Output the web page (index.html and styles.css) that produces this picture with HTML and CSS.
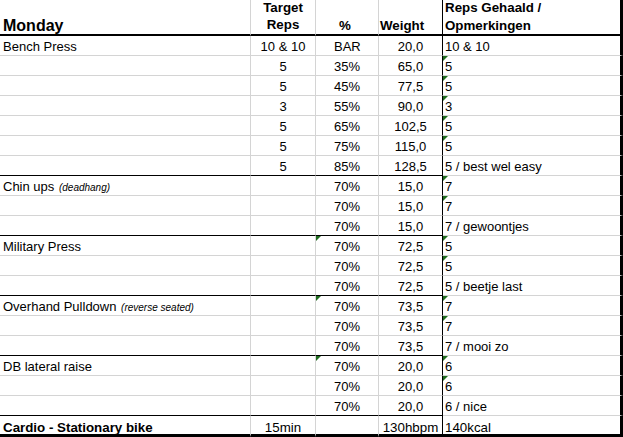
FILE: index.html
```html
<!DOCTYPE html>
<html>
<head>
<meta charset="utf-8">
<link rel="stylesheet" href="styles.css">
</head>
<body>
<div class="sheet">
  <div class="cell hd colA h-monday">Monday</div>
  <div class="cell hd colB h-target"><span>Target</span><span>Reps</span></div>
  <div class="cell hd colC h-pct">%</div>
  <div class="cell hd colD h-weight">Weight</div>
  <div class="cell hd colE h-reps"><span>Reps Gehaald /</span><span>Opmerkingen</span></div>

  <div class="cell colA">Bench Press</div>
  <div class="cell colB">10 &amp; 10</div>
  <div class="cell colC">BAR</div>
  <div class="cell colD">20,0</div>
  <div class="cell colE">10 &amp; 10</div>

  <div class="cell colA"></div>
  <div class="cell colB">5</div>
  <div class="cell colC">35%</div>
  <div class="cell colD">65,0</div>
  <div class="cell colE tri">5</div>

  <div class="cell colA"></div>
  <div class="cell colB">5</div>
  <div class="cell colC">45%</div>
  <div class="cell colD">77,5</div>
  <div class="cell colE tri">5</div>

  <div class="cell colA"></div>
  <div class="cell colB">3</div>
  <div class="cell colC">55%</div>
  <div class="cell colD">90,0</div>
  <div class="cell colE tri">3</div>

  <div class="cell colA"></div>
  <div class="cell colB">5</div>
  <div class="cell colC">65%</div>
  <div class="cell colD">102,5</div>
  <div class="cell colE tri">5</div>

  <div class="cell colA"></div>
  <div class="cell colB">5</div>
  <div class="cell colC">75%</div>
  <div class="cell colD">115,0</div>
  <div class="cell colE tri">5</div>

  <div class="cell colA sec"></div>
  <div class="cell colB sec">5</div>
  <div class="cell colC sec">85%</div>
  <div class="cell colD sec">128,5</div>
  <div class="cell colE">5 / best wel easy</div>

  <div class="cell colA">Chin ups <span class="note">(deadhang)</span></div>
  <div class="cell colB"></div>
  <div class="cell colC">70%</div>
  <div class="cell colD">15,0</div>
  <div class="cell colE tri">7</div>

  <div class="cell colA"></div>
  <div class="cell colB"></div>
  <div class="cell colC">70%</div>
  <div class="cell colD">15,0</div>
  <div class="cell colE tri">7</div>

  <div class="cell colA sec"></div>
  <div class="cell colB sec"></div>
  <div class="cell colC sec">70%</div>
  <div class="cell colD sec">15,0</div>
  <div class="cell colE">7 / gewoontjes</div>

  <div class="cell colA">Military Press</div>
  <div class="cell colB"></div>
  <div class="cell colC tri">70%</div>
  <div class="cell colD">72,5</div>
  <div class="cell colE tri">5</div>

  <div class="cell colA"></div>
  <div class="cell colB"></div>
  <div class="cell colC">70%</div>
  <div class="cell colD">72,5</div>
  <div class="cell colE tri">5</div>

  <div class="cell colA sec"></div>
  <div class="cell colB sec"></div>
  <div class="cell colC sec">70%</div>
  <div class="cell colD sec">72,5</div>
  <div class="cell colE">5 / beetje last</div>

  <div class="cell colA">Overhand Pulldown <span class="note">(reverse seated)</span></div>
  <div class="cell colB"></div>
  <div class="cell colC tri">70%</div>
  <div class="cell colD">73,5</div>
  <div class="cell colE tri">7</div>

  <div class="cell colA"></div>
  <div class="cell colB"></div>
  <div class="cell colC">70%</div>
  <div class="cell colD">73,5</div>
  <div class="cell colE tri">7</div>

  <div class="cell colA sec"></div>
  <div class="cell colB sec"></div>
  <div class="cell colC sec">70%</div>
  <div class="cell colD sec">73,5</div>
  <div class="cell colE">7 / mooi zo</div>

  <div class="cell colA">DB lateral raise</div>
  <div class="cell colB"></div>
  <div class="cell colC tri">70%</div>
  <div class="cell colD">20,0</div>
  <div class="cell colE tri">6</div>

  <div class="cell colA"></div>
  <div class="cell colB"></div>
  <div class="cell colC">70%</div>
  <div class="cell colD">20,0</div>
  <div class="cell colE tri">6</div>

  <div class="cell colA sec"></div>
  <div class="cell colB sec"></div>
  <div class="cell colC sec">70%</div>
  <div class="cell colD sec">20,0</div>
  <div class="cell colE">6 / nice</div>

  <div class="cell colA last cardio">Cardio - Stationary bike</div>
  <div class="cell colB last">15min</div>
  <div class="cell colC last"></div>
  <div class="cell colD last">130hbpm</div>
  <div class="cell colE last">140kcal</div>
</div>
</body>
</html>
```

FILE: styles.css
```css
html, body {
  margin: 0;
  padding: 0;
  background: #ffffff;
}

body {
  font-family: "Liberation Sans", Arial, sans-serif;
  color: #000000;
}

.sheet {
  display: grid;
  grid-template-columns: 251px 65px 63px 64px 180px;
  grid-template-rows: 36px repeat(19, 20px) 21px;
  width: 623px;
}

.cell {
  box-sizing: border-box;
  position: relative;
  border-right: 1px solid #d4d4d4;
  border-bottom: 1px solid #d4d4d4;
  font-size: 13px;
  line-height: 17px;
  padding-top: 2px;
  white-space: nowrap;
}

.colA { padding-left: 3px; }
.colB { text-align: center; }
.colC { padding-left: 18px; }
.colD { text-align: center; border-right-color: #000000; }
.colE { padding-left: 2px; border-right: 3px solid #000000; }

.sec { border-bottom-color: #000000; }

.note {
  font-style: italic;
  font-size: 10px;
  margin-left: 1px;
}

.tri::before {
  content: "";
  position: absolute;
  left: 0;
  top: 0;
  border-top: 5px solid #1e6b1e;
  border-right: 5px solid transparent;
}

.hd {
  display: flex;
  flex-direction: column;
  justify-content: flex-end;
  border-bottom: 2px solid #000000;
  font-weight: bold;
  font-size: 13.33px;
  line-height: 17px;
  padding-top: 0;
  padding-bottom: 0;
}

.h-monday {
  font-size: 16px;
  line-height: 16px;
}

.h-target {
  align-items: center;
  padding-bottom: 1px;
}

.h-pct {
  padding-left: 23px;
}

.h-weight {
  text-align: left;
  padding-left: 1px;
}

.h-reps {
  justify-content: space-between;
  line-height: 13px;
  padding-top: 1px;
  padding-bottom: 2px;
}

.last {
  border-bottom: 3px solid #000000;
  font-size: 13.33px;
  line-height: 15px;
  padding-top: 4px;
}

.cardio {
  font-weight: bold;
}
```
